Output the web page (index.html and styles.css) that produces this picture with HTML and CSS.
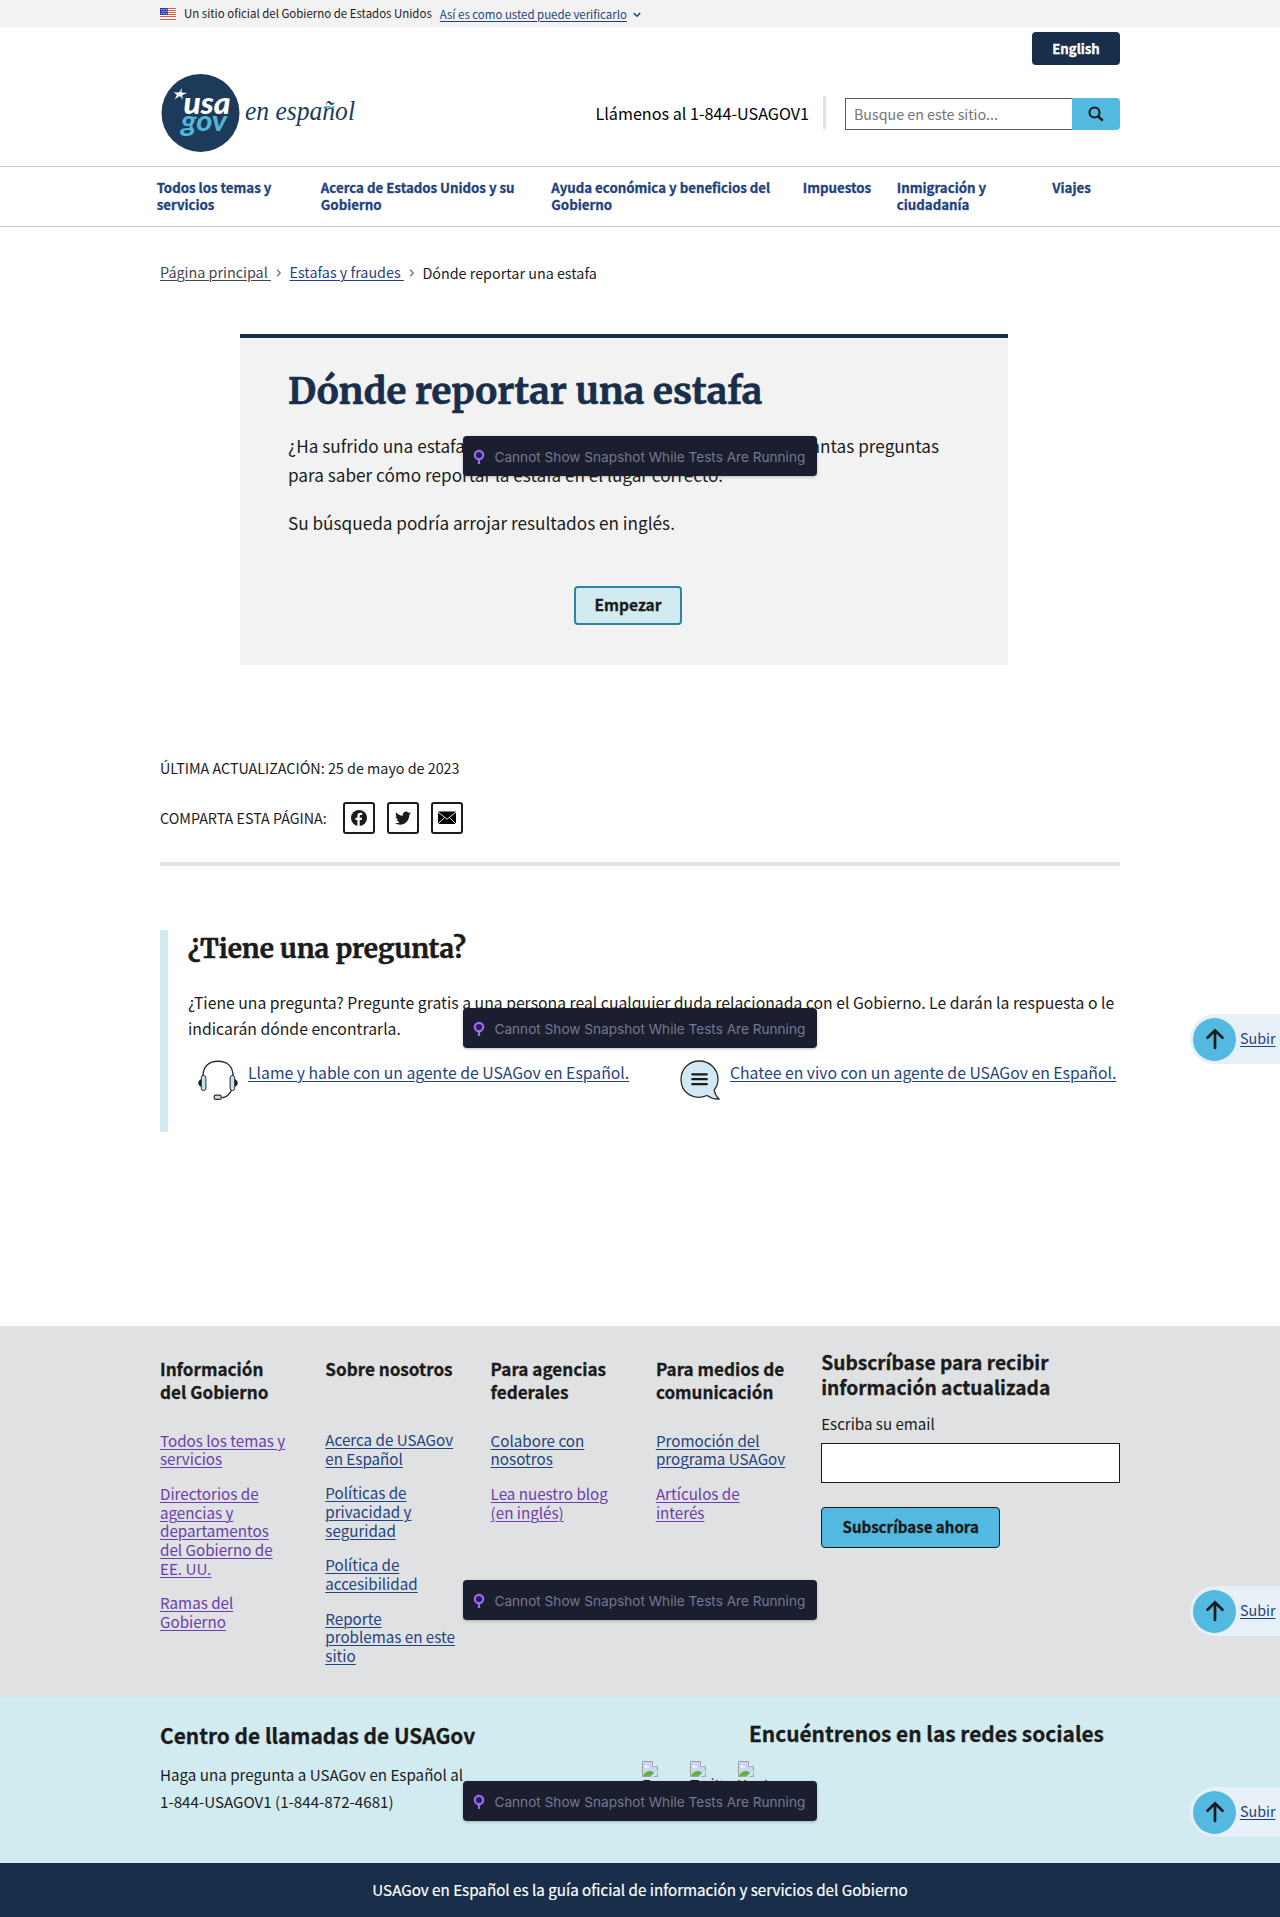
FILE: index.html
```
<!DOCTYPE html>
<html lang="es">
<head>
<meta charset="utf-8">
<title>Dónde reportar una estafa | USAGov en Español</title>
<link rel="stylesheet" href="styles.css">
</head>
<body>
<svg class="sprite" aria-hidden="true">
  <symbol id="pin" viewBox="0 0 12 16"><path d="M6 10v5" stroke="#9a6ee6" stroke-width="2.200"/><circle cx="6" cy="6" r="4.200" fill="#2f1a63" stroke="#9a6ee6" stroke-width="2.200"/></symbol>
  <symbol id="up" viewBox="0 0 24 24"><path d="M12 21V3.500M4.500 10.800 12 3.300l7.500 7.500" fill="none" stroke="#1b1b1b" stroke-width="2.700" stroke-linecap="round"/></symbol>
  <symbol id="chevron" viewBox="0 0 6 8"><path d="m1.200.8 3 3.200-3 3.200" fill="none" stroke="#71767a" stroke-width="1.300"/></symbol>
  <symbol id="broken" viewBox="0 0 16 16"><path d="M.5.500h10l5 5v10H.5z" fill="#c9d8f6" stroke="#a3a3a3"/><path d="M10.500.5v5h5" fill="#fff" stroke="#a3a3a3"/><path d="M2 6.500c0-2 2-2.300 2.500-1.500C6 4 7.500 5 7 6.500z" fill="#fff"/><path d="M1 15c1-3 4-5.500 7-5 2 .2 3 .8 4 2L9 15z" fill="#6aad45"/><path d="m8.500 16 7.500-6v1.800L11 16z" fill="#d3ecf0"/></symbol>
</svg>

<div class="banner">
  <div class="wrap banner-row">
    <svg class="flag" viewBox="0 0 16 12" preserveAspectRatio="none"><path fill="#fff" d="M0 0h16v12H0z"/><path d="M0 .5h16M0 2.500h16M0 4.500h16M0 6.500h16M0 8.500h16M0 11.500h16" stroke="#db5b47"/><path fill="#2a3fa8" d="M0 0h8v7H0z"/><path d="M1 1.500h7M1.800 3.500h6M1 5.500h7" stroke="#fff" stroke-width=".8" stroke-dasharray=".8 1"/></svg>
    <span class="banner-text">Un sitio oficial del Gobierno de Estados Unidos</span>
    <a class="banner-link" href="#">Así es como usted puede verificarlo</a>
    <svg class="caret" viewBox="0 0 8 6"><path d="m.8 1 3.200 3.200L7.200 1" fill="none" stroke="#1a4480" stroke-width="1.500"/></svg>
  </div>
</div>

<header class="header">
  <div class="wrap header-row">
    <svg class="logo" viewBox="0 0 200 80">
      <circle cx="39.500" cy="39" r="39" fill="#1d3a5a"/>
      <path d="m12.800 18.200 5.200.3 2.600-4.300.2 4.300 5.500.4-5 2 .6 4.400-3.300-3.200-5 3.400 2.300-4.500z" fill="#fff"/>
      <path d="m18.600 18 2-3.700.2 3.700zM20.300 22l1.300 1v2.700l-1.900-2.200z" fill="#53b8d8"/>
      <text class="logo-usa" x="22.500" y="39.500" textLength="47" lengthAdjust="spacingAndGlyphs">usa</text>
      <text class="logo-gov" x="20" y="57" textLength="46" lengthAdjust="spacingAndGlyphs">gov</text>
      <text class="logo-script" x="84" y="46" textLength="110" lengthAdjust="spacingAndGlyphs">en español</text>
      <path d="M164 33.500q2.500-1.800 5-.5t4.500-.6" fill="none" stroke="#53b8d8" stroke-width="1.600"/>
    </svg>
    <div class="header-side">
      <a class="lang" href="#">English</a>
      <div class="tools">
        <span class="phone">Llámenos al 1-844-USAGOV1</span>
        <form class="search">
          <div class="search-field">Busque en este sitio...</div>
          <div class="search-btn"><svg viewBox="0 0 16 16"><circle cx="6.500" cy="6.500" r="5" fill="none" stroke="#1b1b1b" stroke-width="2.200"/><path d="m10.300 10.300 4.400 4.400" stroke="#1b1b1b" stroke-width="2.600"/></svg></div>
        </form>
      </div>
    </div>
  </div>
</header>

<nav class="nav">
  <div class="nav-grid">
    <a href="#">Todos los temas y servicios</a>
    <a href="#">Acerca de Estados Unidos y su Gobierno</a>
    <a href="#">Ayuda económica y beneficios del Gobierno</a>
    <a href="#">Impuestos</a>
    <a href="#">Inmigración y ciudadanía</a>
    <a href="#">Viajes</a>
  </div>
</nav>

<main class="wrap">
  <div class="crumbs">
    <a class="visited" href="#">Página principal&nbsp;</a><svg><use href="#chevron"/></svg><a href="#">Estafas y fraudes&nbsp;</a><svg><use href="#chevron"/></svg><span>Dónde reportar una estafa</span>
  </div>

  <section class="card">
    <h1>Dónde reportar una estafa</h1>
    <p><span class="lead">¿Ha sufrido una estafa o quiere reportar una? Responda a unas cuantas preguntas</span><br>para saber cómo reportar la estafa en el lugar correcto.</p>
    <p>Su búsqueda podría arrojar resultados en inglés.</p>
    <a class="start" href="#">Empezar</a>
  </section>

  <p class="updated">ÚLTIMA ACTUALIZACIÓN: 25 de mayo de 2023</p>
  <div class="share">
    <span>COMPARTA ESTA PÁGINA:</span>
    <a href="#"><svg viewBox="0 0 18 18"><circle cx="9" cy="9" r="8" fill="#1b1b1b"/><path d="M9.700 17v-6h2l.4-2.300H9.700V7.300c0-.8.400-1.300 1.300-1.300h1.200V4c-.4-.1-1-.2-1.700-.2-2 0-3.100 1.200-3.100 3.200v1.700h-2V11h2v6z" fill="#fff"/></svg></a>
    <a href="#"><svg viewBox="0 0 24 24"><path d="M22.500 5.600c-.8.300-1.600.6-2.500.7.900-.5 1.600-1.400 1.900-2.400-.8.500-1.800.9-2.700 1a4.300 4.300 0 0 0-7.400 4C8.200 8.800 5 7 2.900 4.500c-1.200 2-.6 4.500 1.300 5.800-.7 0-1.400-.2-2-.5 0 2 1.400 3.900 3.500 4.300-.6.200-1.300.2-2 .1.600 1.700 2.200 3 4 3A8.700 8.700 0 0 1 1.400 19c7.500 4.700 19 .7 19-11.200.8-.5 1.500-1.300 2.100-2.200z" fill="#1b1b1b"/></svg></a>
    <a href="#"><svg viewBox="0 0 18 18"><path d="M0 2.500h18v12.500H0z"/><path d="m0 3 9 7.200L18 3M0 15l6.600-6.600M18 15l-6.600-6.600" fill="none" stroke="#fff" stroke-width=".9"/></svg></a>
  </div>
  <hr class="rule">

  <section class="question">
    <h2>¿Tiene una pregunta?</h2>
    <p>¿Tiene una pregunta? Pregunte gratis a una persona real cualquier duda relacionada con el Gobierno. Le darán la respuesta o le<br>indicarán dónde encontrarla.</p>
    <div class="contacts">
      <div class="contact">
        <svg viewBox="0 0 40 40"><path d="M5 16C5 6 11 1.300 20 1.300S35 6 35 16M34 29c-2 5-5 8.500-10.500 8.800" fill="none" stroke="#2b2b2b" stroke-width="1.400"/><path d="M3.500 19C-.8 20.500-.8 25.500 3.500 27zM36.500 19c4.300 1.500 4.300 6.500 0 8z" fill="#1b1b1b"/><rect x="3.300" y="15.500" width="4.600" height="15" rx="2.300" fill="#bfe3ec" stroke="#2b2b2b"/><rect x="32.100" y="15.500" width="4.600" height="15" rx="2.300" fill="#bfe3ec" stroke="#2b2b2b"/><rect x="16.200" y="35.200" width="7" height="4.200" rx="1.500" fill="#bfe3ec" stroke="#2b2b2b" stroke-width="1.200"/></svg>
        <a href="#">Llame y hable con un agente de USAGov en Español.</a>
      </div>
      <div class="contact">
        <svg viewBox="0 0 40 40"><path d="M27 35.500C14 41 1 33 1 19.500 1 8 9.500 1 19.500 1S38 9 38 19.500c0 4-1.500 7.500-3.800 10.300.6 3.500 2.500 7 4.900 9.200-4.500.3-8.500-1-12.100-3.500z" fill="#d0e9f3" stroke="#2b2b2b" stroke-width="1.300"/><path d="M12.300 14.300h14.500M12.300 19.200h14.500M12.300 24.200h14.500" stroke="#1b1b1b" stroke-width="2.300" stroke-linecap="round"/></svg>
        <a href="#">Chatee en vivo con un agente de USAGov en Español.</a>
      </div>
    </div>
  </section>
</main>

<footer>
  <div class="foot-links">
    <div class="wrap foot-grid">
      <div class="col">
        <h3>Información<br>del Gobierno</h3>
        <a class="seen" href="#">Todos los temas y servicios</a>
        <a class="seen" href="#">Directorios de agencias y departamentos del Gobierno de EE. UU.</a>
        <a class="seen" href="#">Ramas del Gobierno</a>
      </div>
      <div class="col col-about">
        <h3>Sobre nosotros</h3>
        <a href="#">Acerca de USAGov en Español</a>
        <a href="#">Políticas de privacidad y seguridad</a>
        <a href="#">Política de accesibilidad</a>
        <a href="#">Reporte problemas en este sitio</a>
      </div>
      <div class="col">
        <h3>Para agencias federales</h3>
        <a href="#">Colabore con nosotros</a>
        <a class="seen" href="#">Lea nuestro blog<br>(en inglés)</a>
      </div>
      <div class="col">
        <h3>Para medios de comunicación</h3>
        <a href="#">Promoción del programa USAGov</a>
        <a class="seen" href="#">Artículos de<br>interés</a>
      </div>
      <form class="subscribe">
        <h3>Subscríbase para recibir información actualizada</h3>
        <label for="email">Escriba su email</label>
        <input id="email" type="text">
        <button type="button">Subscríbase ahora</button>
      </form>
    </div>
  </div>
  <div class="foot-contact">
    <div class="wrap foot-contact-row">
      <div class="center">
        <h3>Centro de llamadas de USAGov</h3>
        <p>Haga una pregunta a USAGov en Español al<br>1-844-USAGOV1 (1-844-872-4681)</p>
      </div>
      <div class="social">
        <h3>Encuéntrenos en las redes sociales</h3>
        <div class="social-row">
          <a href="#"><svg><use href="#broken"/></svg><span>Facebook</span></a>
          <a href="#"><svg><use href="#broken"/></svg><span>Twitter</span></a>
          <a href="#"><svg><use href="#broken"/></svg><span>Youtube</span></a>
        </div>
      </div>
    </div>
  </div>
  <div class="foot-bottom">USAGov en Español es la guía oficial de información y servicios del Gobierno</div>
</footer>

<div class="toast toast-1"><svg><use href="#pin"/></svg>Cannot Show Snapshot While Tests Are Running</div>
<div class="toast toast-2"><svg><use href="#pin"/></svg>Cannot Show Snapshot While Tests Are Running</div>
<div class="toast toast-3"><svg><use href="#pin"/></svg>Cannot Show Snapshot While Tests Are Running</div>
<div class="toast toast-4"><svg><use href="#pin"/></svg>Cannot Show Snapshot While Tests Are Running</div>

<div class="totop totop-1"><span class="dot"><svg><use href="#up"/></svg></span><a href="#">Subir</a></div>
<div class="totop totop-2"><span class="dot"><svg><use href="#up"/></svg></span><a href="#">Subir</a></div>
<div class="totop totop-3"><span class="dot"><svg><use href="#up"/></svg></span><a href="#">Subir</a></div>
</body>
</html>
```
FILE: styles.css
```
* { box-sizing: border-box; }
body {
  position: relative;
  margin: 0;
  height: 1917px;
  overflow: hidden;
  background: #fff;
  color: #1b1b1b;
  font-family: "Noto Sans CJK SC", "Open Sans", sans-serif;
}
h1, h2, h3, p { margin: 0; }
h1, h2, h3, .lang, .start, .nav-grid a, .subscribe button { -webkit-text-stroke: .3px currentColor; }
a { color: #1f437f; text-underline-offset: 2px; text-decoration-thickness: 1px; }
svg { display: block; flex: none; }
.sprite { position: absolute; width: 0; height: 0; }
.wrap { width: 960px; margin: 0 auto; }

/* Government banner */
.banner { background: #f2f2f2; height: 27px; }
.banner-row { display: flex; align-items: center; height: 27px; font-size: 11.45px; line-height: 19px; }
.flag { width: 16px; height: 12px; margin: 1px 8px 0 0; }
.banner-text { margin-right: 8px; }
.banner-link { padding-top: 2px; }
.caret { width: 8px; height: 6px; margin: 3px 0 0 6px; }

/* Header */
.header { height: 140px; border-bottom: 1px solid #c6cace; }
.header-row { display: flex; justify-content: space-between; }
.logo { width: 200px; height: 80px; margin: 47px 0 0 1px; }
.logo-usa { font: italic 900 30px Lato, sans-serif; fill: #fff; }
.logo-gov { font: italic 700 28px Lato, sans-serif; fill: #53b8d8; }
.logo-script { font: italic 27px "Liberation Serif", serif; fill: #1d3a5a; }
.header-side { display: flex; flex-direction: column; align-items: flex-end; padding-top: 5px; }
.lang { width: 88px; height: 33px; border-radius: 4px; background: #182e4b; color: #fff; font-size: 13.2px; font-weight: 700; line-height: 34px; text-align: center; text-decoration: none; }
.tools { display: flex; align-items: flex-start; margin-top: 31px; }
.phone { height: 33px; padding-right: 14px; border-right: 3px solid #dfe1e2; color: #000; font-size: 16.16px; line-height: 34px; }
.search { display: flex; margin: 2px 0 0 19px; }
.search-field { width: 227px; height: 32px; padding-left: 8px; border: 1px solid #565c65; border-right: 0; color: #757575; font-size: 14.27px; line-height: 30px; }
.search-btn { display: flex; align-items: center; justify-content: center; width: 48px; height: 32px; border-radius: 0 4px 4px 0; background: #53b9e0; }
.search-btn svg { width: 16px; height: 16px; }

/* Main navigation */
.nav { height: 60px; border-bottom: 1px solid #c6cace; }
.nav-grid { display: grid; grid-template-columns: 164.200px 230.500px 251.500px 94px 155.500px 71px; width: 966.700px; margin: 0 auto; padding-top: 12px; }
.nav-grid a { padding-right: 22px; font-size: 13.28px; font-weight: 700; line-height: 17px; text-decoration: none; }

/* Breadcrumb */
.crumbs { display: flex; align-items: center; padding-top: 35px; font-size: 14.35px; line-height: 20px; }
.crumbs svg { width: 6px; height: 8px; margin: 1px 7px 0 5.500px; }
.crumbs span { padding-top: 1px; margin-bottom: -1px; }
.crumbs .visited { color: #3d4551; }

/* Intro card */
.card { width: 768px; height: 331px; margin: 52px 0 0 80px; padding: 31px 48px 0; border-top: 4px solid #182e4b; background: #f2f2f2; }
.card h1 { height: 43px; color: #182e4b; font: 700 36.75px/44px Merriweather, "DejaVu Serif Condensed", serif; -webkit-text-stroke-width: .6px; white-space: nowrap; }
.card p { margin-top: 19px; font-size: 17.18px; line-height: 29px; white-space: nowrap; }
.lead { word-spacing: .1px; }
.start { display: block; width: 108px; height: 39px; margin: 49px 0 0 286px; border: 2px solid #2e83a3; border-radius: 4px; background: #d1ebf0; color: #1b1b1b; font-size: 15.5px; font-weight: 700; line-height: 33px; text-align: center; text-decoration: none; }

.updated { margin-top: 93px; font-size: 14.33px; line-height: 20px; }
.share { display: flex; align-items: center; gap: 12px; margin-top: 24px; font-size: 14.3px; }
.share span { width: 171px; line-height: 32px; }
.share a { display: flex; align-items: center; justify-content: center; width: 32px; height: 32px; border: 2px solid #1b1b1b; border-radius: 3px; }
.share svg { width: 18px; height: 18px; }
.rule { height: 4px; margin: 28px 0 0; border: 0; background: #dfe1e2; }

/* Question block */
.question { height: 202px; margin-top: 64px; padding: 3px 0 0 20px; border-left: 8px solid #d1ebf0; }
.question h2 { font: 700 26.25px/32px Merriweather, "DejaVu Serif Condensed", serif; -webkit-text-stroke-width: .5px; }
.question p { margin-top: 25px; font-size: 15.75px; line-height: 26px; white-space: nowrap; }
.contacts { display: grid; grid-template-columns: 482px 450px; margin: 18px 0 0 10px; }
.contact { display: flex; gap: 10px; font-size: 15.75px; line-height: 26px; white-space: nowrap; }
.contact svg { width: 40px; height: 40px; }

/* Footer */
.foot-links { height: 371px; margin-top: 194px; background: #dfe1e2; }
.foot-grid { display: grid; grid-template-columns: repeat(4, 165.3px) 1fr; }
.col { display: flex; flex-direction: column; align-items: flex-start; gap: 16px; width: 134px; padding-top: 31px; font-size: 15.18px; line-height: 18.66px; }
.col h3 { height: 46px; margin-bottom: 11.800px; font-size: 17.1px; line-height: 23px; }
.col-about h3 { margin-bottom: 11px; }
.seen { color: #6c3db0; }
.subscribe { display: flex; flex-direction: column; align-items: flex-start; padding-top: 24px; }
.subscribe h3 { width: 240px; font-size: 19.2px; line-height: 25px; }
.subscribe label { margin-top: 13px; font-size: 15.1px; line-height: 20px; }
.subscribe input { width: 299px; height: 40px; margin: 10px 0 0; border: 1px solid #1b1b1b; border-radius: 0; background: #fff; }
.subscribe button { width: 179px; height: 41px; margin: 24px 0 0; padding: 0 0 2px; border: 1px solid #1b1b1b; border-radius: 4px; background: #53b9e0; color: #1b1b1b; font: 700 15.1px/37px "Noto Sans CJK SC", "Open Sans", sans-serif; }

.foot-contact { height: 166px; background: #d1ebf0; }
.foot-contact-row { display: flex; }
.foot-contact h3 { font-size: 20.86px; line-height: 28px; }
.center { width: 482px; padding-top: 23.5px; }
.center p { margin-top: 12px; font-size: 15.16px; line-height: 27.5px; }
.social { padding-top: 21.5px; }
.social h3 { padding-left: 107px; }
.social-row { display: flex; gap: 16px; margin-top: 14px; }
.social-row a { width: 32px; height: 36px; overflow: hidden; color: #1b1b1b; font-size: 15px; line-height: 20px; text-decoration: none; }
.social-row svg { width: 16px; height: 16px; }
.social-row span { display: block; margin-top: -2px; }
.foot-bottom { height: 54px; background: #182e4b; color: #fff; font-size: 15.18px; line-height: 52px; text-align: center; -webkit-text-stroke: .2px #fff; }

/* Overlays */
.toast { position: absolute; left: 463px; display: flex; align-items: center; width: 354px; height: 40px; padding: 1px 0 0 10px; border-radius: 4px; background: #1b1e2e; box-shadow: 0 1px 3px rgba(0, 0, 0, .25); color: #747994; font: 13.62px/40px Inter, "Liberation Sans", sans-serif; white-space: nowrap; }
.toast svg { width: 12px; height: 16px; margin-right: 9.500px; }
.toast-1 { top: 436px; }
.toast-2 { top: 1008px; }
.toast-3 { top: 1580px; }
.toast-4 { top: 1781px; }

.totop { position: absolute; right: 0; display: flex; align-items: center; gap: 4px; width: 90px; height: 50px; padding-left: 3px; border-radius: 25px 0 0 25px; background: #e7eff7; font-size: 14.3px; }
.totop a { line-height: 20px; padding-bottom: 2px; }
.dot { display: flex; align-items: center; justify-content: center; width: 43px; height: 43px; border-radius: 50%; background: #53b9e0; }
.dot svg { width: 24px; height: 24px; }
.totop-1 { top: 1014px; }
.totop-2 { top: 1586px; }
.totop-3 { top: 1787px; }
```
